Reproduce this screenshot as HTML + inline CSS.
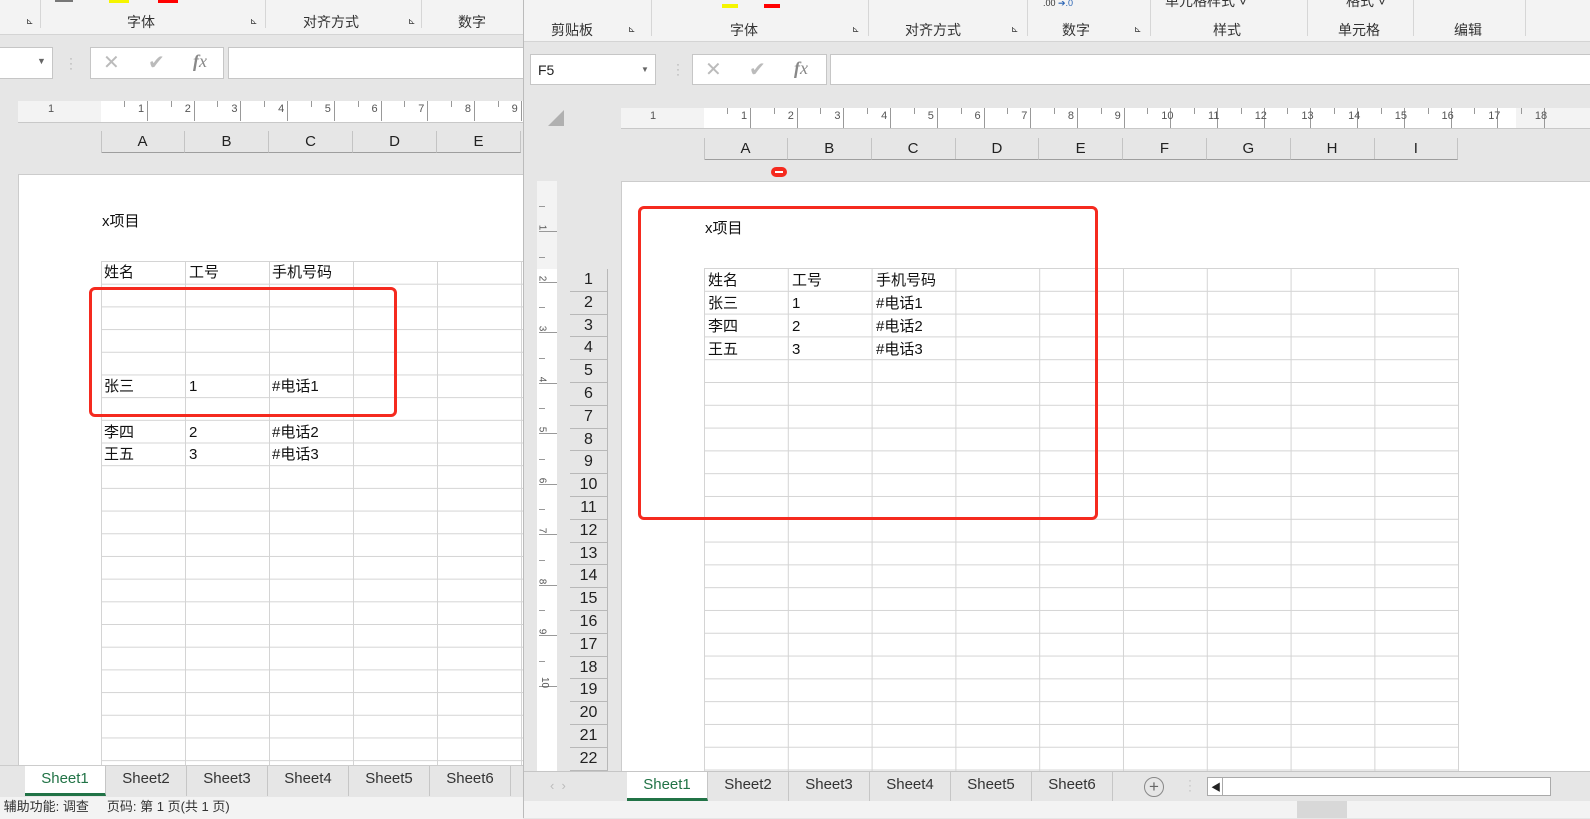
<!DOCTYPE html>
<html><head><meta charset="utf-8">
<style>
*{margin:0;padding:0;box-sizing:border-box}
body{width:1590px;height:818px;overflow:hidden;position:relative;background:#e6e6e6;font-family:"Liberation Sans","Noto Sans CJK SC",sans-serif;color:#222}
.a{position:absolute}
.rib{background:#f3f3f3;border-bottom:1px solid #d4d4d4}
.gl{font-size:14px;color:#333;position:absolute;white-space:nowrap}
.sep{position:absolute;width:1px;background:#d6d6d6}
.box{background:#fff;border:1px solid #c6c6c6;position:absolute}
.ruler{background:#fff;position:absolute;border-bottom:1px solid #c8c8c8;font-size:11px;color:#444}
.colh{position:absolute;height:22px;border-right:1px solid #c4c4c4;border-bottom:1px solid #9e9e9e;text-align:center;font-size:15px;line-height:22px;color:#222}
.cell{position:absolute;font-size:15px;color:#111;white-space:nowrap;line-height:20px;height:20px}
.red{position:absolute;border:3.5px solid #f52a1f;border-radius:6px}
.tab{position:absolute;font-size:15px;color:#333;text-align:center;border-right:1px solid #c6c6c6}
.rn{position:absolute;left:570px;width:38px;border-bottom:1px solid #b8b8b8;text-align:center;font-size:16px;color:#222;background:#e6e6e6;border-right:1px solid #b8b8b8}
</style></head><body>

<div class="a rib" style="left:0;top:0;width:523px;height:35px"></div>
<div class="a" style="left:55px;top:0;width:18px;height:2px;background:#777"></div>
<div class="a" style="left:109px;top:0;width:20px;height:3px;background:#f5f500"></div>
<div class="a" style="left:158px;top:0;width:20px;height:3px;background:#f00"></div>
<div class="sep" style="left:40px;top:0;height:28px"></div>
<div class="sep" style="left:265px;top:0;height:28px"></div>
<div class="sep" style="left:421px;top:0;height:28px"></div>
<div class="gl" style="left:127px;top:12px">字体</div>
<div class="gl" style="left:303px;top:12px">对齐方式</div>
<div class="gl" style="left:458px;top:12px">数字</div>
<div class="gl" style="left:26px;top:16px;font-size:9px">⊾</div>
<div class="gl" style="left:250px;top:16px;font-size:9px">⊾</div>
<div class="gl" style="left:408px;top:16px;font-size:9px">⊾</div>
<div class="box" style="left:-2px;top:47px;width:55px;height:32px"><span class="a" style="left:38px;top:8px;font-size:9px;color:#666">▼</span></div>
<div class="a" style="left:69px;top:56px;color:#aaa;font-size:12px;line-height:5px">·<br>·<br>·</div>
<div class="box" style="left:90px;top:47px;width:134px;height:32px;color:#bbb;font-size:20px"><span class="a" style="left:12px;top:2px">✕</span><span class="a" style="left:57px;top:2px">✔</span><span class="a" style="left:102px;top:3px;font-family:'Liberation Serif',serif;font-style:italic;font-size:18px;color:#888"><b>f</b>x</span></div>
<div class="box" style="left:228px;top:47px;width:300px;height:32px"></div>
<div class="ruler" style="left:18px;top:101px;width:505px;height:22px;background:#f3f3f3"></div>
<div class="ruler" style="left:101px;top:101px;width:422px;height:22px" id="lr"></div>
<div class="a" style="left:48px;top:103px;font-size:11px;color:#555">1</div>
<div id="lch"></div>
<div class="a" style="left:18px;top:174px;width:510px;height:592px;background:#fff;border-left:1px solid #ccc;border-top:1px solid #ccc"></div>
<div class="a" style="left:101px;top:261px;width:430px;height:505px;border-top:1px solid #d4d4d4;background-image:linear-gradient(to right,#d4d4d4 1px,transparent 1px),linear-gradient(to bottom,transparent 21.7px,#d4d4d4 21.7px);background-size:84px 100%,100% 22.7px"></div>
<div class="cell" style="left:104px;top:263px">姓名</div>
<div class="cell" style="left:189px;top:263px">工号</div>
<div class="cell" style="left:272px;top:263px">手机号码</div>
<div class="cell" style="left:104px;top:377px">张三</div>
<div class="cell" style="left:189px;top:377px">1</div>
<div class="cell" style="left:272px;top:377px">#电话1</div>
<div class="cell" style="left:104px;top:423px">李四</div>
<div class="cell" style="left:189px;top:423px">2</div>
<div class="cell" style="left:272px;top:423px">#电话2</div>
<div class="cell" style="left:104px;top:445px">王五</div>
<div class="cell" style="left:189px;top:445px">3</div>
<div class="cell" style="left:272px;top:445px">#电话3</div>
<div class="cell" style="left:102px;top:212px">x项目</div>
<div class="red" style="left:89px;top:287px;width:308px;height:130px"></div>
<div class="a" style="left:0;top:765px;width:523px;height:31px;background:#e6e6e6;border-top:1px solid #ccc"></div>
<div class="a" style="left:0;top:797px;width:523px;height:22px;background:#f3f3f3;font-size:13px;color:#333;line-height:20px">&nbsp;辅助功能: 调查&nbsp;&nbsp;&nbsp;&nbsp;&nbsp;页码: 第 1 页(共 1 页)</div>
<div id="ltabs"></div>

<div class="a" style="left:523px;top:0;width:1067px;height:818px;background:#e6e6e6;border-left:1px solid #bbb"></div>
<div class="a rib" style="left:524px;top:0;width:1066px;height:42px"></div>
<div class="a" style="left:764px;top:4px;width:16px;height:4px;background:#f00"></div>
<div class="a" style="left:722px;top:4px;width:16px;height:4px;background:#f5f500"></div>
<div class="sep" style="left:651px;top:0;height:36px"></div>
<div class="sep" style="left:868px;top:0;height:36px"></div>
<div class="sep" style="left:1027px;top:0;height:36px"></div>
<div class="sep" style="left:1150px;top:0;height:36px"></div>
<div class="sep" style="left:1307px;top:0;height:36px"></div>
<div class="sep" style="left:1413px;top:0;height:36px"></div>
<div class="sep" style="left:1525px;top:0;height:36px"></div>
<div class="gl" style="left:551px;top:20px">剪贴板</div>
<div class="gl" style="left:730px;top:20px">字体</div>
<div class="gl" style="left:905px;top:20px">对齐方式</div>
<div class="gl" style="left:1062px;top:20px">数字</div>
<div class="gl" style="left:1213px;top:20px">样式</div>
<div class="gl" style="left:1338px;top:20px">单元格</div>
<div class="gl" style="left:1454px;top:20px">编辑</div>
<div class="gl" style="left:1165px;top:-9px">单元格样式 ˅</div>
<div class="gl" style="left:1346px;top:-9px">格式 ˅</div>
<div class="gl" style="left:1043px;top:-2px;font-size:9px">.00 <span style="color:#2a64b4">➔.0</span></div>
<div class="gl" style="left:628px;top:24px;font-size:9px">⊾</div>
<div class="gl" style="left:852px;top:24px;font-size:9px">⊾</div>
<div class="gl" style="left:1011px;top:24px;font-size:9px">⊾</div>
<div class="gl" style="left:1134px;top:24px;font-size:9px">⊾</div>
<div class="box" style="left:530px;top:54px;width:126px;height:31px;font-size:14px;padding:7px 0 0 7px">F5<span class="a" style="left:110px;top:10px;font-size:8px;color:#666">▼</span></div>
<div class="a" style="left:676px;top:62px;color:#aaa;font-size:12px;line-height:5px">·<br>·<br>·</div>
<div class="box" style="left:692px;top:54px;width:135px;height:31px;color:#bbb;font-size:20px"><span class="a" style="left:12px;top:2px">✕</span><span class="a" style="left:56px;top:2px">✔</span><span class="a" style="left:101px;top:3px;font-family:'Liberation Serif',serif;font-style:italic;font-size:18px;color:#888"><b>f</b>x</span></div>
<div class="box" style="left:830px;top:54px;width:765px;height:31px"></div>
<div class="a" style="left:548px;top:110px;width:0;height:0;border-left:16px solid transparent;border-bottom:16px solid #b0b0b0"></div>
<div class="ruler" style="left:621px;top:108px;width:969px;height:21px;background:#f3f3f3"></div>
<div class="ruler" style="left:704px;top:108px;width:812px;height:21px" id="rr"></div>
<div class="a" style="left:650px;top:110px;font-size:11px;color:#555">1</div>
<div id="rch"></div>
<div class="a" style="left:771px;top:167px;width:16px;height:10px;border-radius:5px;background:#f52a1f"><div class="a" style="left:4px;top:4px;width:8px;height:2px;background:#fff"></div></div>
<div class="a" style="left:537px;top:181px;width:20px;height:590px;background:#fff"></div>
<div class="a" style="left:537px;top:181px;width:20px;height:88px;background:#f3f3f3"></div>
<div id="vr"></div>
<div class="a" style="left:621px;top:181px;width:970px;height:592px;background:#fff;border-left:1px solid #ccc;border-top:1px solid #ccc"></div>
<div id="rn"></div>
<div class="a" style="left:704px;top:268px;width:755px;height:504px;border-top:1px solid #d4d4d4;border-right:1px solid #d4d4d4;background-image:linear-gradient(to right,#d4d4d4 1px,transparent 1px),linear-gradient(to bottom,transparent 21.8px,#d4d4d4 21.8px);background-size:83.8px 100%,100% 22.8px"></div>
<div class="cell" style="left:705px;top:219px">x项目</div>
<div class="cell" style="left:708px;top:271px">姓名</div>
<div class="cell" style="left:792px;top:271px">工号</div>
<div class="cell" style="left:876px;top:271px">手机号码</div>
<div class="cell" style="left:708px;top:294px">张三</div>
<div class="cell" style="left:792px;top:294px">1</div>
<div class="cell" style="left:876px;top:294px">#电话1</div>
<div class="cell" style="left:708px;top:317px">李四</div>
<div class="cell" style="left:792px;top:317px">2</div>
<div class="cell" style="left:876px;top:317px">#电话2</div>
<div class="cell" style="left:708px;top:340px">王五</div>
<div class="cell" style="left:792px;top:340px">3</div>
<div class="cell" style="left:876px;top:340px">#电话3</div>
<div class="red" style="left:638px;top:206px;width:460px;height:314px"></div>
<div class="a" style="left:524px;top:771px;width:1066px;height:30px;background:#e6e6e6;border-top:1px solid #c6c6c6"></div>
<div class="a" style="left:550px;top:778px;color:#bbb;font-size:13px">‹ &nbsp;›</div>
<div class="a" style="left:1144px;top:777px;width:20px;height:20px;border:1px solid #888;border-radius:50%;text-align:center;line-height:17px;color:#666;font-size:17px">+</div>
<div class="a" style="left:1188px;top:778px;color:#bbb;font-size:12px;line-height:5px">·<br>·<br>·</div>
<div class="a" style="left:1207px;top:777px;width:344px;height:19px;background:#fff;border:1px solid #aaa"><span class="a" style="left:3px;top:1px;font-size:10px">◀</span><div class="a" style="left:14px;top:0;width:1px;height:17px;background:#aaa"></div></div>
<div class="a" style="left:524px;top:801px;width:1066px;height:17px;background:#f3f3f3"></div>
<div class="a" style="left:1297px;top:801px;width:50px;height:17px;background:#d8d8d8"></div>
<div id="rtabs"></div>

<script>
function h(p,html){document.getElementById(p).insertAdjacentHTML('beforeend',html)}
var L='ABCDEFGHI';
for(var i=0;i<5;i++)h('lch','<div class="colh" style="left:'+(101+i*84)+'px;top:131px;width:84px">'+L[i]+'</div>');
for(var i=0;i<9;i++)h('rch','<div class="colh" style="left:'+(704+i*83.8)+'px;top:138px;width:84px">'+L[i]+'</div>');
h('lch','<div class="a" style="left:101px;top:131px;width:1px;height:22px;background:#c4c4c4"></div>');
h('rch','<div class="a" style="left:704px;top:138px;width:1px;height:22px;background:#c4c4c4"></div>');
var s='';for(var k=0;k<18;k++){var x=k*46.7;s+='<div class="a" style="left:'+(x+46)+'px;top:0;width:1px;height:20px;background:#999"></div><div class="a" style="left:'+(x+23)+'px;top:0;width:1px;height:6px;background:#999"></div><div class="a" style="left:'+(x+37)+'px;top:2px;font-size:11px;color:#555">'+(k+1)+'</div>';}
document.getElementById('lr').innerHTML=s;
document.getElementById('rr').innerHTML=s;
for(var k=0;k<10;k++){var y=181+k*50.5;h('vr','<div class="a" style="left:539px;top:'+(y+50)+'px;width:18px;height:1px;background:#999"></div><div class="a" style="left:539px;top:'+(y+25)+'px;width:6px;height:1px;background:#999"></div><div class="a" style="left:539px;top:'+(y+41)+'px;font-size:10px;color:#555;transform:rotate(90deg)">'+(k+1)+'</div>');}
for(var r=0;r<22;r++)h('rn','<div class="rn" style="top:'+(269+r*22.8)+'px;height:22.8px;line-height:22px">'+(r+1)+'</div>');
function tabs(id,x0,top,hh,w){for(var t=0;t<6;t++){var act=t==0;h(id,'<div class="tab" style="left:'+(x0+t*w)+'px;top:'+top+'px;width:'+w+'px;height:'+hh+'px;line-height:'+(hh-4)+'px;'+(act?'background:#fff;color:#217346;border-bottom:3px solid #217346':'')+'">Sheet'+(t+1)+'</div>')}}
tabs('ltabs',25,766,30,81);
tabs('rtabs',627,772,29,81);
</script>
</body></html>
